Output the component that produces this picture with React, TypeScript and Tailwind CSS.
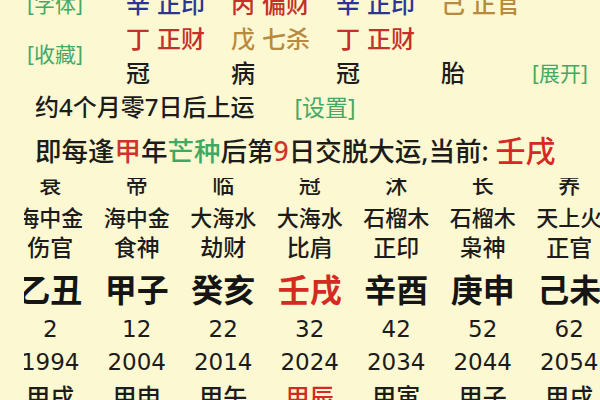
import React from "react";

type Col = { cs: string; ny: string; ss: string; gz: string; age: string; yr: string; ln: string; cur?: boolean };

const cols: Col[] = [
  { cs: "衰", ny: "海中金", ss: "伤官", gz: "乙丑", age: "2", yr: "1994", ln: "甲戌" },
  { cs: "帝", ny: "海中金", ss: "食神", gz: "甲子", age: "12", yr: "2004", ln: "甲申" },
  { cs: "临", ny: "大海水", ss: "劫财", gz: "癸亥", age: "22", yr: "2014", ln: "甲午" },
  { cs: "冠", ny: "大海水", ss: "比肩", gz: "壬戌", age: "32", yr: "2024", ln: "甲辰", cur: true },
  { cs: "沐", ny: "石榴木", ss: "正印", gz: "辛酉", age: "42", yr: "2034", ln: "甲寅" },
  { cs: "长", ny: "石榴木", ss: "枭神", gz: "庚申", age: "52", yr: "2044", ln: "甲子" },
  { cs: "养", ny: "天上火", ss: "正官", gz: "己未", age: "62", yr: "2054", ln: "甲戌" },
];

const BLUE = "text-[#2d3592]";
const RED = "text-[#c4302a]";
const BROWN = "text-[#b88a3f]";

function Pair({ a, b, c }: { a: string; b: string; c: string }) {
  return (
    <div className={`flex items-center gap-[7px] ${c}`}>
      <span>{a}</span>
      <span>{b}</span>
    </div>
  );
}

export default function App() {
  return (
    <div className="w-[600px] h-[400px] overflow-hidden bg-[#fcf8d1] text-[#1c1c1c] font-['Noto_Sans','Noto_Sans_CJK_SC',sans-serif] font-medium leading-none">
      {/* top pillars section */}
      <div className="-mt-[14px] flex">
        <div className="w-[126px] pl-[27px] flex flex-col text-[21px] font-normal text-[#46a867]">
          <div className="h-[36px] flex items-center">[字体]</div>
          <div className="mt-[14px] h-[36px] flex items-center">[收藏]</div>
        </div>
        <div className="grid grid-cols-[105px_105px_105px_91px_auto] text-[24px]">
          <div className="h-[36px] flex items-center"><Pair a="辛" b="正印" c={BLUE} /></div>
          <div className="h-[36px] flex items-center"><Pair a="丙" b="偏财" c={RED} /></div>
          <div className="h-[36px] flex items-center"><Pair a="辛" b="正印" c={BLUE} /></div>
          <div className="h-[36px] flex items-center"><Pair a="己" b="正官" c={BROWN} /></div>
          <div className="h-[36px]" />

          <div className="h-[34px] flex items-center"><Pair a="丁" b="正财" c={RED} /></div>
          <div className="h-[34px] flex items-center"><Pair a="戊" b="七杀" c={BROWN} /></div>
          <div className="h-[34px] flex items-center"><Pair a="丁" b="正财" c={RED} /></div>
          <div className="h-[34px]" />
          <div className="h-[34px]" />

          <div className="h-[34px] flex items-center">冠</div>
          <div className="h-[34px] flex items-center">病</div>
          <div className="h-[34px] flex items-center">冠</div>
          <div className="h-[34px] flex items-center">胎</div>
          <div className="h-[34px] flex items-center text-[21px] font-normal text-[#46a867]">[展开]</div>
        </div>
      </div>

      {/* qi yun lines */}
      <div className="pl-[35px] h-[34px] flex items-center text-[24px]">
        <span>约4个月零7日后上运</span>
        <span className="ml-[40px] text-[23px] font-normal text-[#46a867]">[设置]</span>
      </div>
      <div className="pl-[35px] h-[54px] flex items-center text-[26.5px] whitespace-nowrap">
        <span>即每逢</span>
        <span className="text-[#d2322a]">甲</span>
        <span>年</span>
        <span className="text-[#3fa862]">芒种</span>
        <span>后第</span>
        <span className="text-[#d2322a]">9</span>
        <span>日交脱大运,当前:&nbsp;</span>
        <span className="text-[30px] text-[#d42a22]">壬戌</span>
      </div>

      {/* da yun table */}
      <div className="ml-[24px] h-[222px] overflow-hidden">
        <div className="-mt-[11px] -ml-[17px] flex">
          {cols.map((c, i) => (
            <div key={i} className="w-[86.5px] shrink-0 flex flex-col items-center whitespace-nowrap">
              <div className="h-[34px] flex items-center text-[22px]">{c.cs}</div>
              <div className="h-[31px] flex items-center text-[22px]">{c.ny}</div>
              <div className="h-[31px] flex items-center text-[23px]">{c.ss}</div>
              <div className={`h-[54px] flex items-center text-[32px] font-bold ${c.cur ? "text-[#d42a22]" : "text-[#151515]"}`}>{c.gz}</div>
              <div className="h-[25px] flex items-center text-[23px] font-normal font-['DejaVu_Sans',sans-serif]">{c.age}</div>
              <div className="h-[40px] flex items-center text-[23px] font-normal font-['DejaVu_Sans',sans-serif]">{c.yr}</div>
              <div className={`h-[30px] flex items-center text-[24px] ${c.cur ? "text-[#d42a22]" : ""}`}>{c.ln}</div>
            </div>
          ))}
        </div>
      </div>
    </div>
  );
}
